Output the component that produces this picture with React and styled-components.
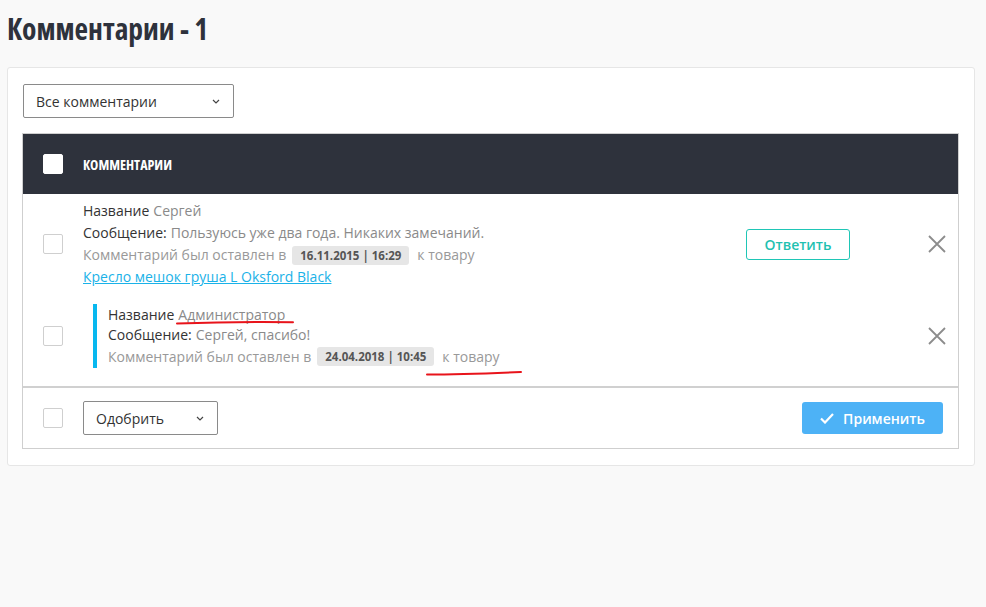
import React from "react";
import styled, { createGlobalStyle } from "styled-components";

const Global = createGlobalStyle`
  html, body { margin: 0; padding: 0; background: #f9f9f9; }
  body { font-family: "Open Sans", "Noto Sans", sans-serif; color: #333; }
  * { box-sizing: border-box; }
`;

const Page = styled.div`
  padding: 12px 11px 0 7px;
`;

const Title = styled.h1`
  margin: 0 0 22px 0;
  font-family: "Open Sans", sans-serif;
  font-stretch: 75%;
  font-weight: 700;
  font-size: 29.5px;
  line-height: 33px;
  color: #2e323c;
`;

const Panel = styled.div`
  background: #fff;
  border: 1px solid #e6e6e6;
  border-radius: 3px;
  padding: 16px 15px 16px 15px;
`;

const SelectBox = styled.div`
  width: ${(p) => p.$w}px;
  height: 34px;
  border: 1px solid #8a8a8a;
  border-radius: 2px;
  display: flex;
  align-items: center;
  justify-content: space-between;
  padding: 0 13px 0 12px;
  font-size: 14px;
  color: #333;
  background: #fff;
`;

const Chevron = () => (
  <svg width="8" height="5" viewBox="0 0 8 5" fill="none">
    <path d="M1 1l3 3L7 1" stroke="#444" strokeWidth="1.2" />
  </svg>
);

const Table = styled.div`
  margin-top: 15px;
  border: 1px solid #cfcfcf;
  margin-left: -1px;
`;

const Header = styled.div`
  height: 60px;
  background: #2e323c;
  display: flex;
  align-items: center;
`;

const CheckCell = styled.div`
  width: 60px;
  flex: 0 0 60px;
  display: flex;
  justify-content: center;
`;

const Checkbox = styled.span`
  display: block;
  width: 20px;
  height: 20px;
  border: 1px solid ${(p) => (p.$light ? "#fff" : "#cfcfcf")};
  background: #fff;
  border-radius: 2px;
`;

const HeaderTitle = styled.div`
  color: #fff;
  font-weight: 700;
  font-size: 14px;
  font-stretch: 75%;
  text-transform: uppercase;
`;

const Row = styled.div`
  display: grid;
  grid-template-columns: 60px 1fr auto 42px;
  align-items: center;
  padding: ${(p) => p.$pad};
`;

const Content = styled.div`
  font-size: 14px;
  line-height: 22px;
  padding-left: ${(p) => (p.$reply ? "10px" : "0")};
`;

const ReplyBody = styled.div`
  border-left: 4px solid #08b8ef;
  padding-left: 11px;
  line-height: 21px;
`;

const Line = styled.div`
  display: flex;
  align-items: center;
  white-space: nowrap;
  height: ${(p) => p.$h || 22}px;
`;

const Label = styled.span`
  color: #333;
  margin-right: 4px;
`;

const Value = styled.span`
  color: #8a8a8a;
  position: relative;
`;

const Muted = styled.span`
  color: #999;
  position: relative;
`;

const DateBadge = styled.span`
  display: inline-block;
  background: #e6e6e6;
  color: #555;
  font-weight: 700;
  font-size: 11.5px;
  line-height: 19px;
  padding: 0 8px;
  border-radius: 3px;
  margin: 0 8px 0 6px;
`;

const Link = styled.a`
  color: #1ab2e8;
  text-decoration: underline;
  cursor: pointer;
`;

const ReplyButton = styled.button`
  height: 31px;
  width: 104px;
  border: 1px solid #1fc6b6;
  border-radius: 3px;
  background: #fff;
  color: #1fc1b1;
  font-family: "Open Sans", sans-serif;
  font-size: 14px;
  font-weight: 600;
  margin-right: 66px;
  padding: 0;
`;

const CloseCell = styled.div`
  display: flex;
  justify-content: center;
`;

const CloseIcon = () => (
  <svg width="18" height="18" viewBox="0 0 18 18" fill="none">
    <path d="M1 1l16 16M17 1L1 17" stroke="#8c8c8c" strokeWidth="1.8" />
  </svg>
);

const Footer = styled.div`
  border-top: 2px solid #d0d0d0;
  height: 62px;
  display: flex;
  align-items: center;
  padding-right: 15px;
`;

const Spacer = styled.div`
  flex: 1;
`;

const ApplyButton = styled.button`
  width: 141px;
  height: 32px;
  background: #4db2f6;
  border: none;
  border-radius: 3px;
  color: #fff;
  font-family: "Open Sans", sans-serif;
  font-weight: 600;
  font-size: 14px;
  display: flex;
  align-items: center;
  justify-content: center;
  gap: 9px;
  padding: 0;
`;

const CheckIcon = () => (
  <svg width="14" height="11" viewBox="0 0 14 11" fill="none">
    <path d="M1 5.5l4 4L13 1" stroke="#fff" strokeWidth="2.2" />
  </svg>
);

const Scribble = styled.svg`
  position: absolute;
  left: ${(p) => p.$l}px;
  top: ${(p) => p.$t}px;
  pointer-events: none;
  overflow: visible;
`;

export default function App() {
  return (
    <>
      <Global />
      <Page>
        <Title>Комментарии - 1</Title>
        <Panel>
          <SelectBox $w={211}>
            <span>Все комментарии</span>
            <Chevron />
          </SelectBox>
          <Table>
            <Header>
              <CheckCell>
                <Checkbox $light />
              </CheckCell>
              <HeaderTitle>Комментарии</HeaderTitle>
            </Header>

            <Row $pad="6px 0 7px 0">
              <CheckCell>
                <Checkbox />
              </CheckCell>
              <Content>
                <Line>
                  <Label>Название</Label>
                  <Value>Сергей</Value>
                </Line>
                <Line>
                  <Label>Сообщение:</Label>
                  <Value>Пользуюсь уже два года. Никаких замечаний.</Value>
                </Line>
                <Line>
                  <Muted>Комментарий был оставлен в</Muted>
                  <DateBadge>16.11.2015 | 16:29</DateBadge>
                  <Muted>к товару</Muted>
                </Line>
                <Line>
                  <Link>Кресло мешок груша L Oksford Black</Link>
                </Line>
              </Content>
              <ReplyButton>Ответить</ReplyButton>
              <CloseCell>
                <CloseIcon />
              </CloseCell>
            </Row>

            <Row $pad="9px 0 18px 0">
              <CheckCell>
                <Checkbox />
              </CheckCell>
              <Content $reply>
                <ReplyBody>
                  <Line $h={20}>
                    <Label>Название</Label>
                    <Value>
                      Администратор
                      <Scribble $l={-2} $t={16} width="118" height="5" viewBox="0 0 118 5">
                        <path d="M1 3.5 C 30 2.5, 70 1.5, 117 2.2" stroke="#e8141b" strokeWidth="2" fill="none" strokeLinecap="round" />
                      </Scribble>
                    </Value>
                  </Line>
                  <Line $h={21}>
                    <Label>Сообщение:</Label>
                    <Value>Сергей, спасибо!</Value>
                  </Line>
                  <Line $h={23}>
                    <Muted>Комментарий был оставлен в</Muted>
                    <DateBadge>24.04.2018 | 10:45</DateBadge>
                    <Muted>
                      к товару
                      <Scribble $l={-16} $t={24} width="96" height="6" viewBox="0 0 96 6">
                        <path d="M1 4.5 C 30 4.5, 60 3.5, 95 2" stroke="#e8141b" strokeWidth="2" fill="none" strokeLinecap="round" />
                      </Scribble>
                    </Muted>
                  </Line>
                </ReplyBody>
              </Content>
              <span />
              <CloseCell>
                <CloseIcon />
              </CloseCell>
            </Row>

            <Footer>
              <CheckCell>
                <Checkbox />
              </CheckCell>
              <SelectBox $w={135}>
                <span>Одобрить</span>
                <Chevron />
              </SelectBox>
              <Spacer />
              <ApplyButton>
                <CheckIcon />
                Применить
              </ApplyButton>
            </Footer>
          </Table>
        </Panel>
      </Page>
    </>
  );
}
